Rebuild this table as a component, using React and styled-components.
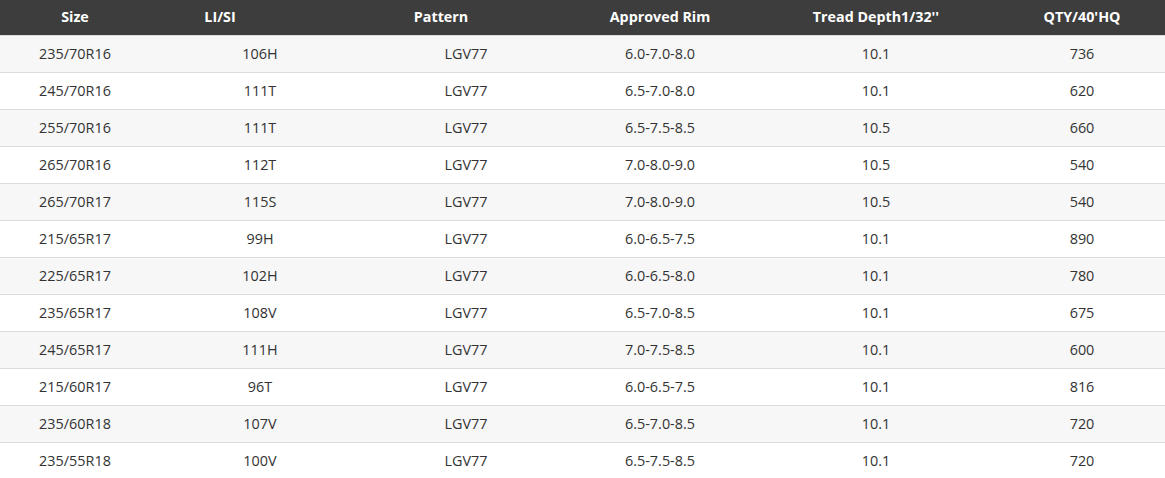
import React from "react";
import styled, { createGlobalStyle } from "styled-components";

const Global = createGlobalStyle`
  html, body { margin: 0; padding: 0; background: #fff; }
  body { font-family: "Open Sans", "Noto Sans", Arial, sans-serif; }
`;

const COLS = "150px 140px 302px 136px 296px 116px";

const Table = styled.div`
  width: 1165px;
  display: flex;
  flex-direction: column;
`;

const HeadRow = styled.div`
  display: grid;
  grid-template-columns: ${COLS};
  height: 35px;
  align-items: center;
  background: #3d3d3d;
  padding-right: 25px;
`;

const HeadCell = styled.div`
  color: #fff;
  font-weight: 700;
  font-size: 14.3px;
  text-align: center;
  white-space: nowrap;
  margin-top: -2px;
`;

const Row = styled.div`
  display: grid;
  grid-template-columns: ${COLS};
  height: 36px;
  align-items: center;
  background: ${(p) => (p.$odd ? "#f7f7f7" : "#fff")};
  border-top: 1px solid #dcdcdc;
  padding-right: 25px;
`;

const Cell = styled.div`
  color: #333;
  font-size: 14.4px;
  text-align: center;
  white-space: nowrap;
  margin-top: -2px;
  padding-left: ${(p) => p.$shift || 0}px;
`;

const rows = [
  ["235/70R16", "106H", "LGV77", "6.0-7.0-8.0", "10.1", "736"],
  ["245/70R16", "111T", "LGV77", "6.5-7.0-8.0", "10.1", "620"],
  ["255/70R16", "111T", "LGV77", "6.5-7.5-8.5", "10.5", "660"],
  ["265/70R16", "112T", "LGV77", "7.0-8.0-9.0", "10.5", "540"],
  ["265/70R17", "115S", "LGV77", "7.0-8.0-9.0", "10.5", "540"],
  ["215/65R17", "99H", "LGV77", "6.0-6.5-7.5", "10.1", "890"],
  ["225/65R17", "102H", "LGV77", "6.0-6.5-8.0", "10.1", "780"],
  ["235/65R17", "108V", "LGV77", "6.5-7.0-8.5", "10.1", "675"],
  ["245/65R17", "111H", "LGV77", "7.0-7.5-8.5", "10.1", "600"],
  ["215/60R17", "96T", "LGV77", "6.0-6.5-7.5", "10.1", "816"],
  ["235/60R18", "107V", "LGV77", "6.5-7.0-8.5", "10.1", "720"],
  ["235/55R18", "100V", "LGV77", "6.5-7.5-8.5", "10.1", "720"],
];

const headers = ["Size", "LI/SI", "Pattern", "Approved Rim", "Tread Depth1/32''", "QTY/40'HQ"];
const shifts = [0, 80, 50, 0, 0, 0];

export default function App() {
  return (
    <>
      <Global />
      <Table>
        <HeadRow>
          {headers.map((h) => (
            <HeadCell key={h}>{h}</HeadCell>
          ))}
        </HeadRow>
        {rows.map((r, i) => (
          <Row key={i} $odd={i % 2 === 0}>
            {r.map((c, j) => (
              <Cell key={j} $shift={shifts[j]}>
                {c}
              </Cell>
            ))}
          </Row>
        ))}
      </Table>
    </>
  );
}
